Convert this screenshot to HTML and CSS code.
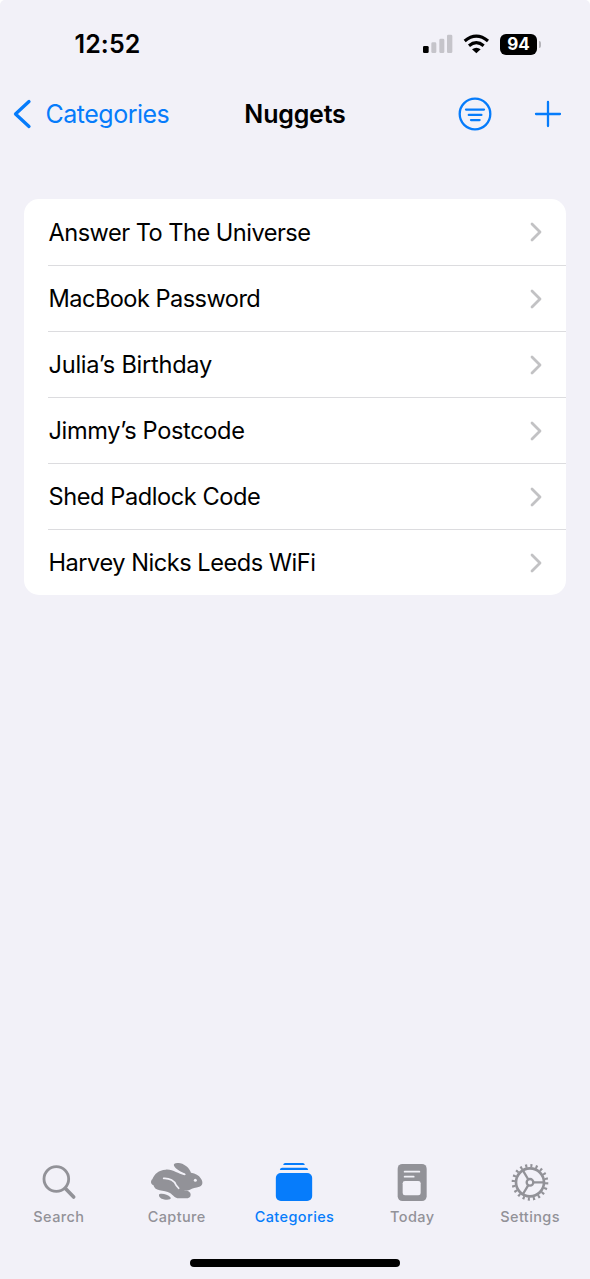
FILE: index.html
```html
<!DOCTYPE html>
<html lang="en">
<head>
<meta charset="utf-8">
<title>Nuggets</title>
<link rel="stylesheet" href="styles.css">
</head>
<body>
<div class="screen">
  <header class="status">
    <span class="time">12:52</span>
    <div class="indicators">
      <svg class="signal" viewBox="69 42 90 60"><rect x="69" y="78" width="17" height="21" rx="4"/><g class="dim"><rect x="94" y="67" width="15" height="32" rx="4"/><rect x="118" y="56" width="15" height="43" rx="4"/><rect x="141" y="44" width="16" height="55" rx="4"/></g></svg>
      <svg class="wifi" viewBox="189 42 81 60"><g class="arcs"><path d="M194 63Q229 34 264 63"/><path d="M207 77Q229 59 251 77"/></g><path d="M216 88Q229 78 242 88L229 100Z"/></svg>
      <span class="battery">94</span><i class="battery-cap"></i>
    </div>
  </header>
  <nav class="navbar">
    <a class="back"><svg viewBox="0 0 20 30"><path d="M17 2.5 3.5 15 17 27.5"/></svg><span>Categories</span></a>
    <h1>Nuggets</h1>
    <div class="actions">
      <svg class="filter" viewBox="0 0 34 34"><circle cx="17" cy="17" r="15.3"/><path d="M8 12.6H26M10.8 17.9H23.4M13 23.1H21.6"/></svg>
      <svg class="plus" viewBox="0 0 28 28"><path d="M14 2V26M2 14H26"/></svg>
    </div>
  </nav>
  <main class="list">
    <div class="row"><span class="universe">Answer To The Universe</span><svg viewBox="0 0 12 20"><path d="M2 2 10 10 2 18"/></svg></div>
    <div class="row"><span class="macbook">MacBook Password</span><svg viewBox="0 0 12 20"><path d="M2 2 10 10 2 18"/></svg></div>
    <div class="row"><span class="birthday">Julia’s Birthday</span><svg viewBox="0 0 12 20"><path d="M2 2 10 10 2 18"/></svg></div>
    <div class="row"><span class="postcode">Jimmy’s Postcode</span><svg viewBox="0 0 12 20"><path d="M2 2 10 10 2 18"/></svg></div>
    <div class="row"><span class="padlock">Shed Padlock Code</span><svg viewBox="0 0 12 20"><path d="M2 2 10 10 2 18"/></svg></div>
    <div class="row"><span class="wifi-code">Harvey Nicks Leeds WiFi</span><svg viewBox="0 0 12 20"><path d="M2 2 10 10 2 18"/></svg></div>
  </main>
  <footer class="tabs">
    <a class="tab">
      <svg viewBox="33 30 168 132"><circle class="line" cx="109" cy="87" r="37" stroke-width="8.5"/><path class="line" d="M137 116 161 141" stroke-width="11"/></svg>
      <span>Search</span>
    </a>
    <a class="tab">
      <svg viewBox="41 30 168 132">
        <path d="M51 88C57 72 70 60 91 59C113 57 128 72 147 76C151 76 153 74 148 70C137 65 121 58 116 47C113 39 124 37 135 40C151 44 162 55 167 68C181 70 190 75 197 86C204 96 202 107 192 110C181 114 171 113 164 119C160 122 153 121 145 121C158 122 166 126 166 134C166 142 160 145 151 145H130C119 145 113 135 104 129C96 124 83 123 73 121C62 119 56 113 54 105C46 104 45 92 51 88Z"/>
        <path d="M73 132C84 130 98 134 105 142C109 147 103 149 96 149C82 149 72 144 71 137C71 134 71 133 73 132Z"/>
        <path class="cut" d="M85 85C103 84 118 92 122 105L130 115" stroke-width="5"/>
        <circle class="hole" cx="180" cy="91" r="4.5"/>
      </svg>
      <span>Capture</span>
    </a>
    <a class="tab active">
      <svg viewBox="64.5 30 168 132"><path d="M116 45Q117 39 122 39H175Q180 39 181 45ZM106 60Q107 53 113 53H184Q190 53 191 60Z"/><rect x="94" y="69" width="109" height="84" rx="15"/></svg>
      <span>Categories</span>
    </a>
    <a class="tab">
      <svg viewBox="28 30 168 132"><rect x="69" y="42" width="87" height="111" rx="14"/><path class="cut" d="M90 65H134M90 80H117" stroke-width="5.5"/><rect class="hole" x="84" y="93" width="54" height="43" rx="7"/></svg>
      <span>Today</span>
    </a>
    <a class="tab">
      <svg viewBox="36 30 168 132"><circle class="line" cx="120" cy="97" r="42" stroke-width="8"/><circle class="teeth" cx="120" cy="97" r="50" pathLength="200"/><circle class="line" cx="120" cy="97" r="10" stroke-width="7"/><path class="line" d="M131 97H160M114 87 99 62M114 107 99 132" stroke-width="7"/></svg>
      <span>Settings</span>
    </a>
  </footer>
  <div class="home"></div>
</div>
</body>
</html>
```
FILE: styles.css
```css
* { box-sizing: border-box; }
body { margin: 0; background: #fff; font-family: Inter, "Liberation Sans", sans-serif; color: #000; }
svg { display: block; flex: none; }
.screen { height: 1279px; display: flex; flex-direction: column; background: #f2f1f8; border-radius: 5px 5px 0 0; overflow: hidden; }
.status { height: 88px; display: flex; justify-content: space-between; padding: 0 49px 0 74.5px; }
.time { font-size: 25px; font-weight: 600; line-height: 88px; letter-spacing: 0.1px; }
.indicators { display: flex; height: 22px; margin-top: 33px; align-items: center; }
.signal { width: 30px; height: 20px; }
.dim { fill: #c5c4ca; }
.wifi { width: 27px; height: 20px; margin-left: 10px; }
.arcs { fill: none; stroke: #000; stroke-width: 9.5; }
.battery { width: 37px; height: 21px; margin-left: 10px; border-radius: 6px; background: #000; color: #fff; font-size: 17px; font-weight: 700; line-height: 21px; text-align: center; }
.battery-cap { width: 2px; height: 7px; margin-left: 2px; border-radius: 0 2px 2px 0; background: #b5b4ba; }
.navbar { height: 52px; display: grid; grid-template-columns: 200px 190px 200px; align-items: center; }
.back { display: flex; align-items: center; gap: 14px; padding-left: 11.5px; color: #067cfb; font-size: 25px; letter-spacing: -0.5px; }
.back svg { width: 20px; height: 30px; fill: none; stroke: #067cfb; stroke-width: 3.3; stroke-linecap: round; stroke-linejoin: round; }
h1 { margin: 0; font-size: 25px; font-weight: 600; text-align: center; letter-spacing: -0.2px; }
.actions { display: flex; align-items: center; justify-content: flex-end; gap: 42px; padding-right: 28px; }
.actions svg { fill: none; stroke: #067cfb; stroke-width: 2.3; stroke-linecap: round; }
.filter { width: 34px; height: 34px; }
.plus { width: 28px; height: 28px; }
.list { margin: 59px 24px 0; height: 396px; background: #fff; border-radius: 15px; display: grid; grid-template-rows: 67px repeat(4, 66px) 65px; padding-left: 24px; }
.row { display: flex; justify-content: space-between; align-items: center; padding-right: 24.5px; font-size: 23.6px; }
.row:not(:last-child) { border-bottom: 1px solid #dcdcdf; }
.row span { padding-left: 0.5px; }
.row svg { width: 12px; height: 20px; fill: none; stroke: #c2c2c4; stroke-width: 2.8; stroke-linecap: round; stroke-linejoin: round; }
.universe { letter-spacing: -0.52px; }
.macbook { letter-spacing: -0.55px; }
.birthday { letter-spacing: -0.27px; }
.postcode { letter-spacing: -0.35px; }
.padlock { letter-spacing: -0.43px; }
.wifi-code { letter-spacing: -0.48px; }
.tabs { margin-top: auto; display: grid; grid-template-columns: repeat(5, 117.8px); height: 99px; }
.tab { display: flex; flex-direction: column; align-items: center; font-size: 14.5px; font-weight: 500; letter-spacing: 0.4px; line-height: 18px; color: #929298; }
.tab svg { width: 56px; height: 44px; margin-bottom: 4px; fill: currentColor; }
.active { color: #067cfb; }
.line { fill: none; stroke: currentColor; stroke-linecap: round; }
.teeth { fill: none; stroke: currentColor; stroke-width: 10; stroke-dasharray: 4 6; }
.cut { fill: none; stroke: #f2f1f8; stroke-linecap: round; }
.hole { fill: #f2f1f8; }
.home { width: 210px; height: 8px; margin: 0 auto 12px; border-radius: 4px; background: #000; }
```
